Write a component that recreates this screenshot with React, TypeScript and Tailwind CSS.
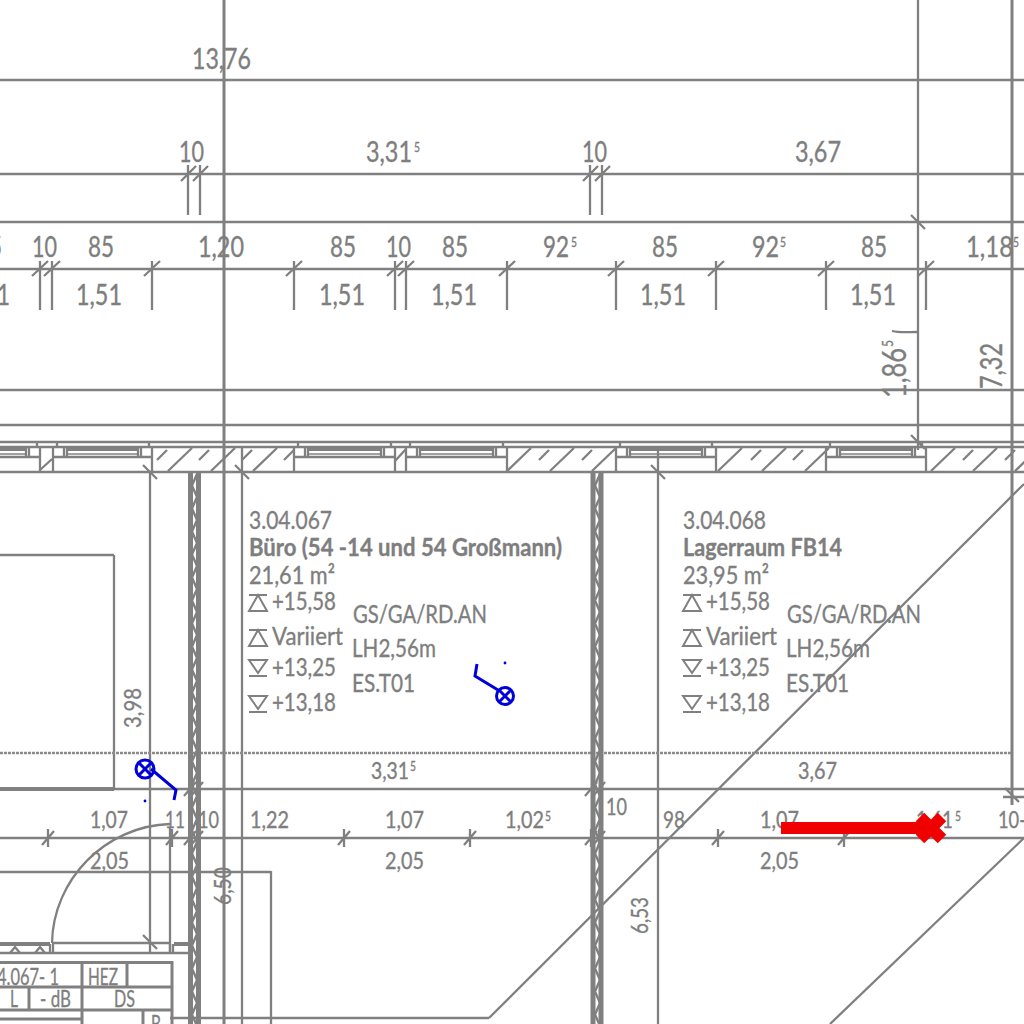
const ink = "fill-[#7e7e7e] stroke-[#7e7e7e] stroke-[0.35] font-[Lato,sans-serif] ";
const big = "text-[28px]";
const mid = "text-[24px]";
const room = "text-[25px]";
const sup = "text-[14px]";

// x, baseline, width, text
const bigLabels: [number, number, number, string][] = [
  [192, 69, 59, "13,76"],
  [179, 162, 25, "10"],
  [366, 162, 46, "3,31"],
  [582, 162, 25, "10"],
  [795, 162, 46, "3,67"],
  [-24, 257, 26, "85"],
  [32, 257, 25, "10"],
  [88, 257, 26, "85"],
  [198, 257, 46, "1,20"],
  [330, 257, 26, "85"],
  [386, 257, 25, "10"],
  [442, 257, 26, "85"],
  [543, 257, 26, "92"],
  [652, 257, 26, "85"],
  [752, 257, 27, "92"],
  [861, 257, 26, "85"],
  [966, 257, 47, "1,18"],
  [-34, 305, 44, "1,51"],
  [76, 305, 46, "1,51"],
  [319, 305, 46, "1,51"],
  [431, 305, 46, "1,51"],
  [640, 305, 46, "1,51"],
  [850, 305, 46, "1,51"],
];

const midLabels: [number, number, number, string][] = [
  [90, 828, 38, "1,07"],
  [165, 828, 20, "11"],
  [198, 828, 21, "10"],
  [250, 828, 39, "1,22"],
  [90, 869, 39, "2,05"],
  [371, 779, 38, "3,31"],
  [385, 828, 39, "1,07"],
  [505, 828, 39, "1,02"],
  [385, 869, 39, "2,05"],
  [798, 779, 39, "3,67"],
  [606, 815, 21, "10"],
  [663, 828, 22, "98"],
  [760, 828, 39, "1,07"],
  [916, 828, 37, "1,61"],
  [998, 828, 28, "10-"],
  [760, 869, 39, "2,05"],
  [-3, 985, 62, "4.067- 1"],
  [88, 985, 30, "HEZ"],
  [10, 1007, 8, "L"],
  [40, 1007, 31, "- dB"],
  [114, 1007, 21, "DS"],
  [151, 1032, 10, "B"],
];

const supLabels: [number, number][] = [
  [414, 152], [571, 247], [780, 247], [1013, 247], [410, 771], [545, 821], [955, 821],
];

// baseline x, start y (bottom), length, text, class
const rotated: [number, number, number, string, string][] = [
  [906, 398, 50, "1,86", "text-[33px]"],
  [1002, 389, 46, "7,32", "text-[30px]"],
  [141, 728, 40, "3,98", mid],
  [231, 905, 38, "6,50", mid],
  [648, 934, 37, "6,53", mid],
];

const hatch = [
  { long: [168, 211, 253], short: [157, 199, 242, 284] },
  { long: [507, 550, 592], short: [539, 582] },
  { long: [718, 762, 805], short: [751, 793] },
  { long: [931, 973, 1015], short: [963, 1005] },
].flatMap((h) => [
  ...h.long.map((x) => [x, 471, x + 24, 448]),
  ...h.short.map((x) => [x, 460, x + 10, 450]),
]);

const windows: [number, number][] = [
  [-60, 40], [53, 152], [294, 395], [406, 507], [616, 716], [826, 926],
];
const caps = [37, 57, 149, 298, 391, 410, 503, 620, 712, 830, 922];

// long horizontal and vertical lines of the plan
const lines: [number, number, number, number][] = [
  [0, 80, 1024, 80], [0, 174, 1024, 174], [0, 222, 1024, 222], [0, 269, 1024, 269],
  [0, 390, 1024, 390], [0, 425, 1024, 425], [0, 442, 1024, 442], [0, 447, 1024, 447], [0, 472, 1024, 472],
  [0, 789, 1024, 789], [0, 838, 1024, 838], [0, 872, 271, 872], [271, 871, 271, 1024],
  [918, 0, 918, 450], [150, 472, 150, 952], [170, 828, 170, 952], [242, 447, 242, 1024], [658, 447, 658, 1024],
  [114, 555, 114, 790], [0, 555, 114, 555],
  [1024, 484, 489, 1018], [489, 1018, 170, 1018], [1024, 838, 830, 1024],
];

const upperTicks = [188, 200, 590, 602];
const dimTicks = [40, 52, 152, 294, 395, 406, 507, 616, 716, 826, 926];
const lowerTicks = [48, 172, 190, 197, 344, 470, 591, 599, 718, 844];
const midTicks = [190, 197, 591, 599];
const backTicks: [number, number][] = [[918, 222], [918, 442], [150, 472], [242, 472], [658, 472], [150, 942], [1012, 795]];

function Zigzag({ x }: { x: number }) {
  const pts: string[] = [];
  for (let y = 474, i = 0; y < 1030; y += 11.5, i++) {
    pts.push(`${i % 2 ? x : x + 5},${y}`);
  }
  return <polyline points={pts.join(" ")} className="fill-none stroke-[#808080] stroke-[2.4]" />;
}

function Level({ x, y, up }: { x: number; y: number; up: boolean }) {
  const d = up
    ? `M${x} ${y}H${x + 18}M${x} ${y + 16}H${x + 18}L${x + 9} ${y}Z`
    : `M${x} ${y}H${x + 18}L${x + 9} ${y + 13}ZM${x} ${y + 16}H${x + 18}`;
  return <path d={d} className="fill-none stroke-[#808080] stroke-2" />;
}

function RoomLabel({ dx, no, name, nameW, area }: { dx: number; no: string; name: string; nameW: number; area: string }) {
  const t = ink + room;
  return (
    <g>
      <text x={249 + dx} y={529} textLength={83} lengthAdjust="spacingAndGlyphs" className={t}>{no}</text>
      <text x={249 + dx} y={556} textLength={nameW} lengthAdjust="spacingAndGlyphs" className={t + " font-bold"}>{name}</text>
      <text x={249 + dx} y={584} textLength={86} lengthAdjust="spacingAndGlyphs" className={t}>{area}</text>
      <Level x={249 + dx} y={595} up />
      <text x={272 + dx} y={610} textLength={64} lengthAdjust="spacingAndGlyphs" className={t}>+15,58</text>
      <Level x={249 + dx} y={630} up />
      <text x={272 + dx} y={645} textLength={71} lengthAdjust="spacingAndGlyphs" className={t}>Variiert</text>
      <Level x={249 + dx} y={660} up={false} />
      <text x={272 + dx} y={676} textLength={64} lengthAdjust="spacingAndGlyphs" className={t}>+13,25</text>
      <Level x={249 + dx} y={696} up={false} />
      <text x={272 + dx} y={711} textLength={64} lengthAdjust="spacingAndGlyphs" className={t}>+13,18</text>
      <text x={353 + dx} y={623} textLength={134} lengthAdjust="spacingAndGlyphs" className={t}>GS/GA/RD.AN</text>
      <text x={352 + dx} y={657} textLength={84} lengthAdjust="spacingAndGlyphs" className={t}>LH2,56m</text>
      <text x={352 + dx} y={692} textLength={63} lengthAdjust="spacingAndGlyphs" className={t}>ES.T01</text>
    </g>
  );
}

export default function App() {
  const line = "stroke-[#808080] stroke-[2.3]";
  const tick = "fill-none stroke-[#808080] stroke-[2.3]";
  const blue = "fill-none stroke-[#0000d8] stroke-[3]";
  return (
    <div className="h-[1024px] w-[1024px] overflow-hidden bg-white">
      <svg viewBox="0 0 1024 1024" className="block h-[1024px] w-[1024px]">
        {lines.map(([a, b, c, d], i) => (
          <line key={i} x1={a} y1={b} x2={c} y2={d} className={line} />
        ))}

        {/* heavier axes and the dotted line */}
        <path d="M224 0V1024M1012 0V805" className="fill-none stroke-[#808080] stroke-[3]" />
        <path d="M0 753H1012" className="fill-none stroke-[#8c8c8c] stroke-[2.5] [stroke-dasharray:3_1]" />
        <path d="M0 789H114" className="fill-none stroke-[#808080] stroke-[4]" />

        {/* window band */}
        {hatch.map(([a, b, c, d], i) => (
          <line key={i} x1={a} y1={b} x2={c} y2={d} className={line} />
        ))}
        {windows.map(([a, b]) => (
          <g key={a}>
            <path
              d={`M${a} 447V472M${b} 447V472M${a} 457H${b}M${a + 11} 447V457M${b - 11} 447V457M${a + 14} 447V457M${b - 14} 447V457`}
              className={tick}
            />
            <path d={`M${a + 14} 449.5H${b - 14}`} className="fill-none stroke-[#808080] stroke-[3]" />
            <path d={`M${a + 14} 454H${b - 14}`} className="fill-none stroke-[#808080] stroke-[1.5]" />
          </g>
        ))}
        <path d="M40 470L52 459M395 461L406 449" className={tick} />
        {caps.map((x) => (
          <line key={x} x1={x} y1={442} x2={x} y2={447} className={line} />
        ))}

        {/* walls */}
        <path d="M190.5 472V1024M198.5 472V1024M593 472V1024M601 472V1024" className="fill-none stroke-[#808080] stroke-[5]" />
        <Zigzag x={192} />
        <Zigzag x={595} />

        {/* dimension ticks */}
        {upperTicks.map((x) => (
          <path key={x} d={`M${x} 165V215M${x - 7} 181L${x + 8} 166`} className={tick} />
        ))}
        {dimTicks.map((x) => (
          <path key={x} d={`M${x} 261V310M${x - 8} 276L${x + 8} 261`} className={tick} />
        ))}
        {lowerTicks.map((x) => (
          <path key={x} d={`M${x} 829V847M${x - 6} 845L${x + 6} 831`} className={tick} />
        ))}
        {midTicks.map((x) => (
          <path key={x} d={`M${x - 6} 796L${x + 6} 782`} className={tick} />
        ))}
        {backTicks.map(([x, y]) => (
          <path key={`${x}-${y}`} d={`M${x - 7} ${y - 7}L${x + 7} ${y + 7}`} className={tick} />
        ))}
        <path d="M1003 797H1024M892 331C900 333 908 332 917 332" className={tick} />

        {/* door */}
        <path d="M52 943C53 880 105 826 170 824" className={tick} />
        <path d="M0 944H50M174 944H190" className="fill-none stroke-[#808080] stroke-[4]" />
        <path d="M0 953H190M50 944V953M53 944V953M52 943H170M170 944V953M173 944V953" className={tick} />
        <path d="M10 953L15 947L20 953M35 953L40 947L45 953" className={tick} />

        {/* table */}
        <path
          d="M0 962.5H172M172 961V1024M0 987H172M0 1010H172M0 1019H82M82 962V1024M127 962V987M29 987V1010M143 1010V1024"
          className="fill-none stroke-[#808080] stroke-[3]"
        />

        {/* dimensions */}
        {bigLabels.map(([x, y, w, s], i) => (
          <text key={i} x={x} y={y} textLength={w} lengthAdjust="spacingAndGlyphs" className={ink + big}>
            {s}
          </text>
        ))}
        {midLabels.map(([x, y, w, s], i) => (
          <text key={i} x={x} y={y} textLength={w} lengthAdjust="spacingAndGlyphs" className={ink + mid}>
            {s}
          </text>
        ))}
        {supLabels.map(([x, y]) => (
          <text key={x} x={x} y={y} textLength={6} lengthAdjust="spacingAndGlyphs" className={ink + sup}>
            5
          </text>
        ))}
        {rotated.map(([x, y, w, s, c]) => (
          <text
            key={s}
            x={x}
            y={y}
            transform={`rotate(-90 ${x} ${y})`}
            textLength={w}
            lengthAdjust="spacingAndGlyphs"
            className={ink + c}
          >
            {s}
          </text>
        ))}
        <text x={893} y={347} transform="rotate(-90 893 347)" textLength={7} lengthAdjust="spacingAndGlyphs" className={ink + "text-[16px]"}>
          5
        </text>

        <RoomLabel dx={0} no="3.04.067" name="Büro (54 -14 und 54 Großmann)" nameW={313} area="21,61 m²" />
        <RoomLabel dx={434} no="3.04.068" name="Lagerraum FB14" nameW={159} area="23,95 m²" />

        {/* blue markers */}
        <g className={blue}>
          <circle cx={145} cy={769} r={9} />
          <path d="M139 763L151 775M151 763L139 775M151 769L176 790L174 800" />
          <circle cx={505} cy={696} r={8.5} />
          <path d="M499 690L511 702M511 690L499 702M498 690L475 676L477 664" />
        </g>
        <circle cx={145} cy={801} r={1.4} className="fill-[#0000d8]" />
        <circle cx={505} cy={663} r={1.4} className="fill-[#0000d8]" />

        {/* red marker */}
        <path d="M781 828H930M920 817L942 839M942 817L920 839" className="fill-none stroke-[#f00000] stroke-[12]" />
      </svg>
    </div>
  );
}
